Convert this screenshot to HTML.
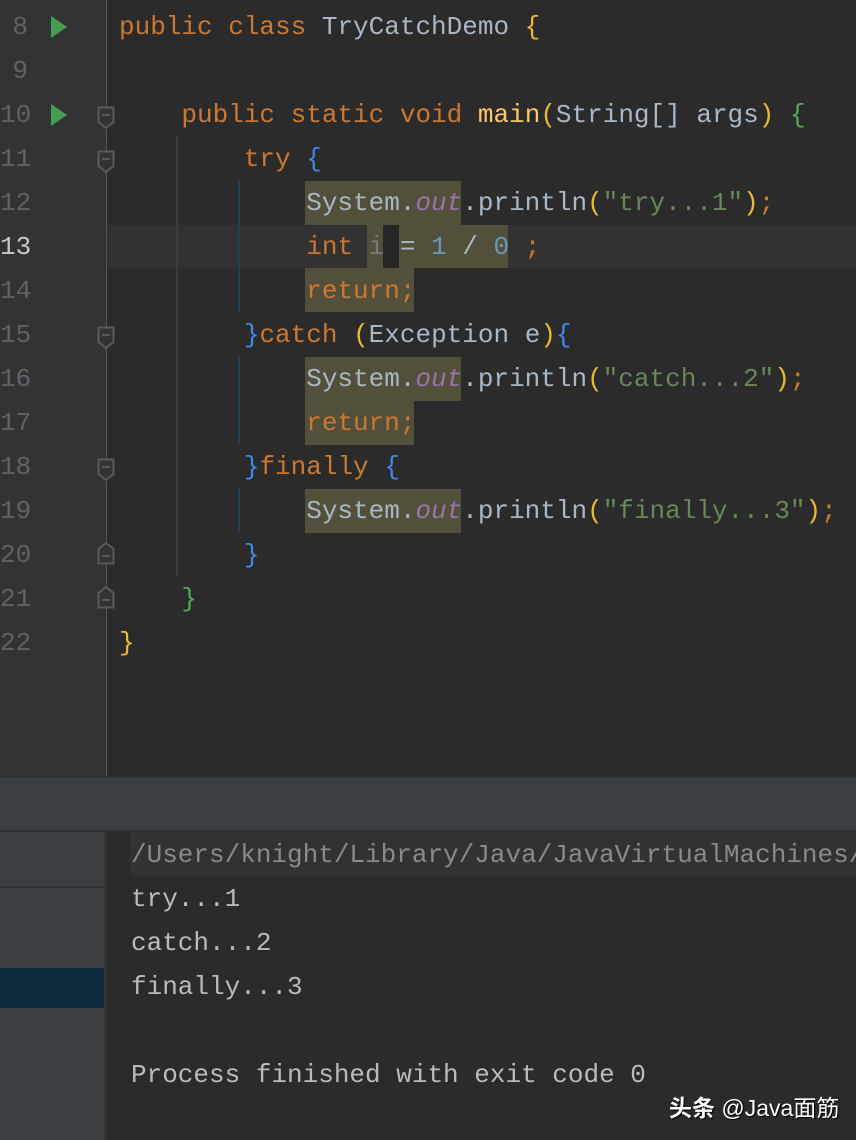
<!DOCTYPE html>
<html><head><meta charset="utf-8"><style>
*{margin:0;padding:0;box-sizing:border-box}
body{width:856px;height:1140px;overflow:hidden;background:#2b2b2b;position:relative;font-family:"Liberation Mono",monospace;font-size:26px}
.abs{position:absolute}
.ln{position:absolute;left:0;width:28px;text-align:right;color:#606366;height:44px;line-height:44px}
.code{position:absolute;left:119px;height:44px;line-height:44px;white-space:pre;color:#a9b7c6}
.k{color:#cc7832}.s{color:#6a8759}.n{color:#6897bb}.o{color:#9876aa;font-style:italic}.m{color:#ffc66d}
.y{color:#e8ba36}.g{color:#54a857}.b{color:#3d8beb}
.hl{background:#52503a}
.fold{position:absolute;left:97px}
</style></head><body>
<div class="abs" style="left:0;top:0;width:106px;height:776px;background:#313335"></div>
<div class="abs" style="left:106px;top:0;width:1px;height:776px;background:#555"></div>
<div class="abs" style="left:107px;top:225px;width:749px;height:43px;background:#323232"></div>
<div class="abs hl" style="left:305px;top:181px;width:156px;height:44px"></div>
<div class="abs hl" style="left:367px;top:225px;width:16px;height:43px"></div>
<div class="abs" style="left:383px;top:225px;width:16px;height:43px;background:#262626"></div>
<div class="abs hl" style="left:399px;top:225px;width:109px;height:43px"></div>
<div class="abs hl" style="left:305px;top:268px;width:109px;height:44px"></div>
<div class="abs hl" style="left:305px;top:357px;width:156px;height:44px"></div>
<div class="abs hl" style="left:305px;top:401px;width:109px;height:44px"></div>
<div class="abs hl" style="left:305px;top:489px;width:156px;height:44px"></div>
<div class="abs" style="left:176px;top:136px;width:2px;height:440px;background:#344134"></div>
<div class="abs" style="left:238px;top:180px;width:2px;height:132px;background:#2c3f52"></div>
<div class="abs" style="left:238px;top:356px;width:2px;height:88px;background:#2c3f52"></div>
<div class="abs" style="left:238px;top:488px;width:2px;height:44px;background:#2c3f52"></div>
<div class="ln" style="top:5px">8</div><div class="ln" style="top:49px">9</div><div class="ln" style="top:93px">10</div><div class="ln" style="top:137px">11</div><div class="ln" style="top:181px">12</div><div class="ln" style="top:225px;color:#c8c8c8">13</div><div class="ln" style="top:269px">14</div><div class="ln" style="top:313px">15</div><div class="ln" style="top:357px">16</div><div class="ln" style="top:401px">17</div><div class="ln" style="top:445px">18</div><div class="ln" style="top:489px">19</div><div class="ln" style="top:533px">20</div><div class="ln" style="top:577px">21</div><div class="ln" style="top:621px">22</div>
<svg class="abs" style="left:50px;top:15px" width="18" height="24"><path d="M1 1L17 12L1 23Z" fill="#499c54"/></svg>
<svg class="abs" style="left:50px;top:103px" width="18" height="24"><path d="M1 1L17 12L1 23Z" fill="#499c54"/></svg>
<svg class="fold" style="top:106px" width="18" height="24"><path d="M1.5 1.5H16.5V16L9 22L1.5 16Z" fill="#313335" stroke="#5a5a5a" stroke-width="2"/><path d="M5 9H13" stroke="#5a5a5a" stroke-width="2"/></svg>
<svg class="fold" style="top:150px" width="18" height="24"><path d="M1.5 1.5H16.5V16L9 22L1.5 16Z" fill="#313335" stroke="#5a5a5a" stroke-width="2"/><path d="M5 9H13" stroke="#5a5a5a" stroke-width="2"/></svg>
<svg class="fold" style="top:326px" width="18" height="24"><path d="M1.5 1.5H16.5V16L9 22L1.5 16Z" fill="#313335" stroke="#5a5a5a" stroke-width="2"/><path d="M5 9H13" stroke="#5a5a5a" stroke-width="2"/></svg>
<svg class="fold" style="top:458px" width="18" height="24"><path d="M1.5 1.5H16.5V16L9 22L1.5 16Z" fill="#313335" stroke="#5a5a5a" stroke-width="2"/><path d="M5 9H13" stroke="#5a5a5a" stroke-width="2"/></svg>
<svg class="fold" style="top:541px" width="18" height="24"><path d="M1.5 22.5H16.5V8L9 2L1.5 8Z" fill="#313335" stroke="#5a5a5a" stroke-width="2"/><path d="M5 15H13" stroke="#5a5a5a" stroke-width="2"/></svg>
<svg class="fold" style="top:585px" width="18" height="24"><path d="M1.5 22.5H16.5V8L9 2L1.5 8Z" fill="#313335" stroke="#5a5a5a" stroke-width="2"/><path d="M5 15H13" stroke="#5a5a5a" stroke-width="2"/></svg>
<div class="code" style="top:5px"><span class="k">public class</span> TryCatchDemo <span class="y">{</span></div>
<div class="code" style="top:93px">    <span class="k">public static void</span> <span class="m">main</span><span class="y">(</span>String[] args<span class="y">)</span> <span class="g">{</span></div>
<div class="code" style="top:137px">        <span class="k">try</span> <span class="b">{</span></div>
<div class="code" style="top:181px">            System.<span class="o">out</span>.println<span class="y">(</span><span class="s">"try...1"</span><span class="y">)</span><span class="k">;</span></div>
<div class="code" style="top:225px">            <span class="k">int</span> <span style="color:#7a7a7a">i</span> = <span class="n">1</span> / <span class="n">0</span> <span class="k">;</span></div>
<div class="code" style="top:269px">            <span class="k">return;</span></div>
<div class="code" style="top:313px">        <span class="b">}</span><span class="k">catch</span> <span class="y">(</span>Exception e<span class="y">)</span><span class="b">{</span></div>
<div class="code" style="top:357px">            System.<span class="o">out</span>.println<span class="y">(</span><span class="s">"catch...2"</span><span class="y">)</span><span class="k">;</span></div>
<div class="code" style="top:401px">            <span class="k">return;</span></div>
<div class="code" style="top:445px">        <span class="b">}</span><span class="k">finally</span> <span class="b">{</span></div>
<div class="code" style="top:489px">            System.<span class="o">out</span>.println<span class="y">(</span><span class="s">"finally...3"</span><span class="y">)</span><span class="k">;</span></div>
<div class="code" style="top:533px">        <span class="b">}</span></div>
<div class="code" style="top:577px">    <span class="g">}</span></div>
<div class="code" style="top:621px"><span class="y">}</span></div>
<div class="abs" style="left:0;top:776px;width:856px;height:2px;background:#323232"></div>
<div class="abs" style="left:0;top:778px;width:856px;height:52px;background:#3c3f41"></div>
<div class="abs" style="left:0;top:830px;width:856px;height:2px;background:#2f3132"></div>
<div class="abs" style="left:0;top:832px;width:104px;height:308px;background:#3c3f41"></div>
<div class="abs" style="left:0;top:886px;width:104px;height:2px;background:#323232"></div>
<div class="abs" style="left:0;top:968px;width:104px;height:40px;background:#0d293e"></div>
<div class="abs" style="left:104px;top:832px;width:3px;height:308px;background:#323232"></div>
<div class="abs" style="left:130px;top:832px;width:726px;height:44px;background:#323232"></div>
<div class="code" style="left:131px;top:833px;color:#8a8a8a">/Users/knight/Library/Java/JavaVirtualMachines/</div>
<div class="code" style="left:131px;top:877px;color:#bbbbbb">try...1</div>
<div class="code" style="left:131px;top:921px;color:#bbbbbb">catch...2</div>
<div class="code" style="left:131px;top:965px;color:#bbbbbb">finally...3</div>
<div class="code" style="left:131px;top:1053px;color:#bbbbbb">Process finished with exit code 0</div>
<div class="abs" style="left:669px;top:1092px;color:#fff;font-family:'Liberation Sans','Noto Sans CJK SC',sans-serif;font-size:23px;line-height:32px;text-shadow:1px 1px 1px #000;white-space:nowrap"><b>头条</b> @Java面筋</div>
</body></html>
